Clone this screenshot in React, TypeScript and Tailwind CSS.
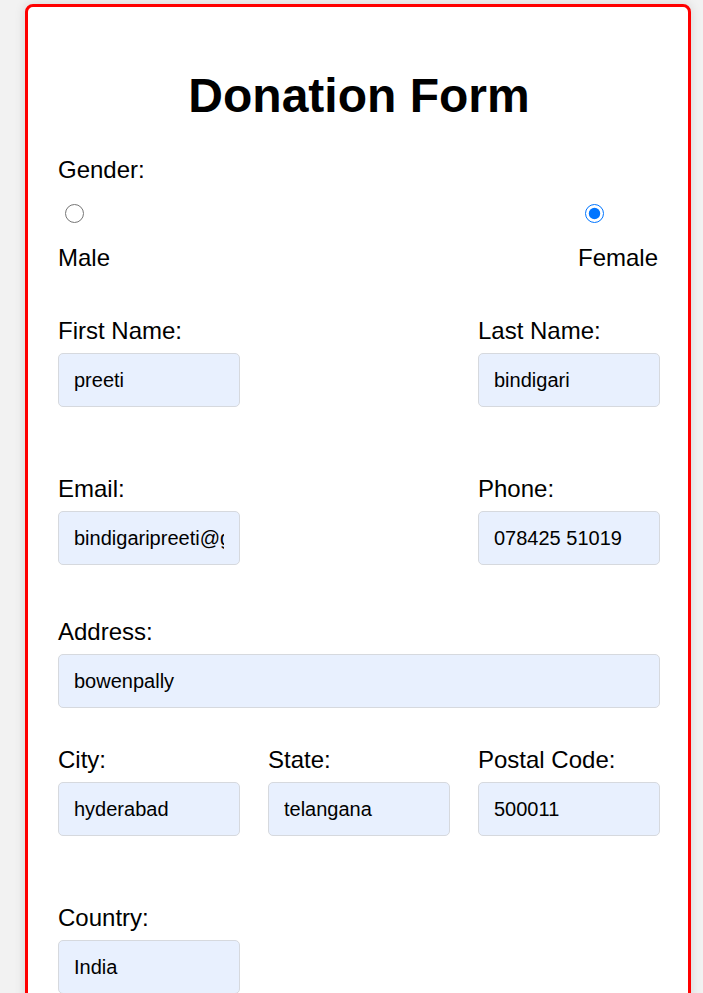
import React from "react";

const inputCls =
  "block w-full h-[54px] px-[15px] text-[20px] text-black bg-[#e8f0fe] border border-[#d6d9de] rounded-[5px] outline-none";

function Field({ label, value, className = "" }: { label: string; value: string; className?: string }) {
  return (
    <div className={className}>
      <label className="block text-[24px] leading-[28px] mb-[8px]">{label}</label>
      <input className={inputCls} defaultValue={value} readOnly />
    </div>
  );
}

export default function App() {
  return (
    <div className="min-h-screen bg-[#f2f2f2] pt-[4px] pl-[25px] font-['Liberation_Sans',Arial,sans-serif] text-black">
      <div className="w-[666px] bg-white border-[3px] border-[#ff0000] rounded-[8px] pt-[30px] pl-[30px] pr-[28px] pb-[40px] shadow-[0_0_12px_rgba(0,0,0,0.12)]">
        <h1 className="text-[48px] leading-[55px] font-bold text-center mt-[31px] mb-[33px]">Donation Form</h1>

        <label className="block text-[24px] leading-[28px]">Gender:</label>
        <div className="flex justify-between pr-[2px]">
          <div>
            <input type="radio" name="gender" className="block w-[19px] h-[19px] ml-[7px] mt-[20px] m-0 accent-[#0075ff]" />
            <div className="text-[24px] leading-[28px] mt-[21px]">Male</div>
          </div>
          <div>
            <input type="radio" name="gender" defaultChecked className="block w-[19px] h-[19px] ml-[7px] mt-[20px] m-0 accent-[#0075ff]" />
            <div className="text-[24px] leading-[28px] mt-[21px]">Female</div>
          </div>
        </div>

        <div className="grid grid-cols-3 gap-x-[28px] mt-[45px]">
          <Field label="First Name:" value="preeti" />
          <Field label="Last Name:" value="bindigari" className="col-start-3" />
        </div>

        <div className="grid grid-cols-3 gap-x-[28px] mt-[68px]">
          <Field label="Email:" value="bindigaripreeti@gmail.com" />
          <Field label="Phone:" value="078425 51019" className="col-start-3" />
        </div>

        <Field label="Address:" value="bowenpally" className="mt-[53px]" />

        <div className="grid grid-cols-3 gap-x-[28px] mt-[38px]">
          <Field label="City:" value="hyderabad" />
          <Field label="State:" value="telangana" />
          <Field label="Postal Code:" value="500011" />
        </div>

        <div className="grid grid-cols-3 gap-x-[28px] mt-[68px]">
          <Field label="Country:" value="India" />
        </div>
      </div>
    </div>
  );
}
